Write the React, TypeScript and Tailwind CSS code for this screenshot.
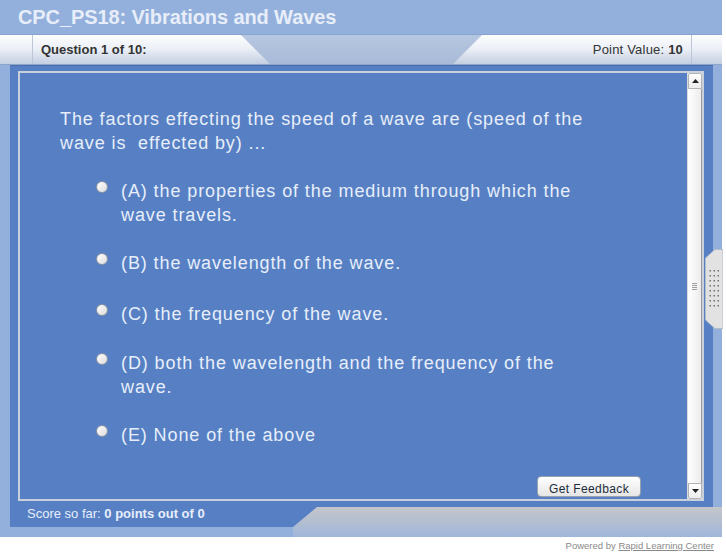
const options = [
  { text: "(A) the properties of the medium through which the wave travels.", gap: "mt-0" },
  { text: "(B) the wavelength of the wave.", gap: "mt-[24px]" },
  { text: "(C) the frequency of the wave.", gap: "mt-[27px]" },
  { text: "(D) both the wavelength and the frequency of the wave.", gap: "mt-[25px]" },
  { text: "(E) None of the above", gap: "mt-[24px]" },
];

function Handle() {
  const dots = [];
  for (let r = 0; r < 8; r++) {
    for (let c = 0; c < 3; c++) {
      dots.push(<rect key={`${r}-${c}`} x={4.5 + c * 4} y={21 + r * 5} width={1.5} height={1.5} fill="#6f6f6f" />);
    }
  }
  return (
    <svg width="18" height="80" viewBox="0 0 18 80">
      <polygon points="0.5,9 10,0.5 18,0.5 18,79.5 10,79.5 0.5,71" fill="#e2e2e2" stroke="#b4bcc8" />
      {dots}
    </svg>
  );
}

function Scrollbar() {
  return (
    <div className="flex w-[15px] flex-col border-l border-[#d8dde4] bg-[#f4f4f4]">
      <div className="flex h-[16px] items-center justify-center rounded-t-[2px] border border-[#b3b3b3] bg-gradient-to-b from-white to-[#ececec]">
        <svg width="7" height="4" viewBox="0 0 7 4">
          <polygon points="3.5,0 7,4 0,4" fill="#222" />
        </svg>
      </div>
      <div className="flex flex-1 items-center justify-center border-r border-[#9a9a9a] bg-gradient-to-r from-white to-[#ececec]">
        <div className="flex flex-col gap-[1px]">
          <div className="h-px w-[5px] bg-[#a0a0a0]" />
          <div className="h-px w-[5px] bg-[#a0a0a0]" />
          <div className="h-px w-[5px] bg-[#a0a0a0]" />
          <div className="h-px w-[5px] bg-[#a0a0a0]" />
        </div>
      </div>
      <div className="flex h-[16px] items-center justify-center rounded-b-[2px] border border-[#b3b3b3] bg-gradient-to-b from-white to-[#ececec]">
        <svg width="7" height="4" viewBox="0 0 7 4">
          <polygon points="0,0 7,0 3.5,4" fill="#222" />
        </svg>
      </div>
    </div>
  );
}

export default function App() {
  return (
    <div className="relative h-[554px] w-[726px] bg-white font-['Liberation_Sans',Arial,sans-serif]">
      <div className="relative flex h-[537px] w-[722px] flex-col bg-[#93b0dc]">
        {/* Title */}
        <div className="flex h-[35px] items-center border-b border-[#87a3d0] pl-[18px] text-[20px] font-bold tracking-[-0.1px] text-[#e8eef9]">
          CPC_PS18: Vibrations and Waves
        </div>

        {/* Tab bar */}
        <div className="flex h-[30px] border-b border-[#8ea5cb] bg-gradient-to-b from-[#fefefe] via-[#eaeef5] to-[#c4cfe2]">
          <div className="w-[33px] border-r border-[#bcc6d6]" />
          <div className="flex w-[208px] items-center pl-[8px] text-[13px] font-bold text-[#333]">
            Question 1 of 10:
          </div>
          <div className="w-[241px] bg-gradient-to-b from-[#b6c7e1] to-[#a8bad8] [clip-path:polygon(0_0,100%_0,calc(100%-29px)_100%,29px_100%)]" />
          <div className="flex flex-1">
            <div className="flex flex-1 items-center justify-end border-r border-[#bcc6d6] pr-[8px] text-[13px] tracking-[0.2px] text-[#333]">
              Point Value:&nbsp;<span className="font-bold">10</span>
            </div>
            <div className="w-[30px]" />
          </div>
        </div>

        {/* Body */}
        <div className="relative flex flex-1 pb-[10px] pl-[10px] pr-[9px]">
          <div className="flex flex-1 flex-col border-t border-[#4a6dab] bg-[#5680c3] pl-[8px] pr-[9px] pt-[5px]">
            <div className="flex flex-1 border-2 border-[#c8d0db]">
              <div className="flex flex-1 flex-col pl-[40px] pt-[34px] text-[18px] leading-[24px] tracking-[0.9px] text-[#e7eefa]">
                <p className="w-[560px] whitespace-pre-wrap">
                  The factors effecting the speed of a wave are (speed of the wave is  effected by) ...
                </p>
                <div className="mt-[24px] flex flex-col pl-[36px]">
                  {options.map((o) => (
                    <div key={o.text} className={`flex items-start gap-[13px] ${o.gap}`}>
                      <div className="mt-[2px] h-[12px] w-[12px] shrink-0 rounded-full border border-[#8a93a3] bg-gradient-to-br from-white to-[#dcdcdc]" />
                      <span className="w-[470px]">{o.text}</span>
                    </div>
                  ))}
                </div>
                <div className="flex-1" />
                <button
                  type="button"
                  className="mb-[2px] mr-[46px] h-[21px] w-[104px] self-end rounded-[4px] border border-[#98a2ae] bg-gradient-to-b from-white to-[#e6e6e6] text-[12px] tracking-[0.4px] text-[#1c2c3a]"
                >
                  Get Feedback
                </button>
              </div>
              <Scrollbar />
            </div>
            <div className="flex h-[26px] items-center pl-[9px] text-[13px] text-[#e7eefa]">
              Score so far:&nbsp;<span className="font-bold">0 points out of 0</span>
            </div>
          </div>

          {/* bottom-right tab */}
          <div className="absolute bottom-0 left-[293px] right-0 h-[30px] bg-gradient-to-b from-[#c4c6cb] via-[#b3bed0] to-[#9fb6db] [clip-path:polygon(24px_0,100%_0,100%_100%,0_100%,0_20px)]" />

          {/* side handle */}
          <div className="absolute right-[-1px] top-[184px]">
            <Handle />
          </div>
        </div>
      </div>
      <div className="mt-[2px] pr-[12px] text-right text-[9.5px] text-[#8a8a8a]">
        Powered by <span className="underline">Rapid Learning Center</span>
      </div>
    </div>
  );
}
